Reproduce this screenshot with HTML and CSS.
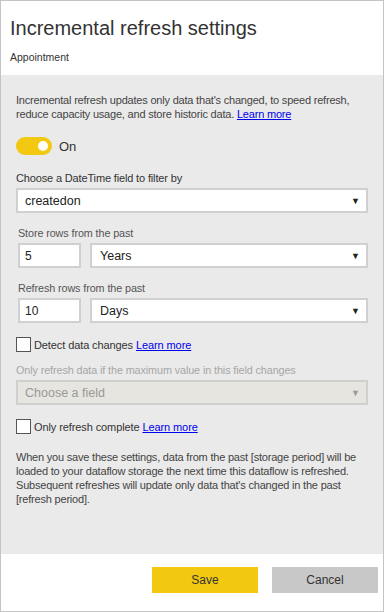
FILE: index.html
```html
<!DOCTYPE html>
<html lang="en">
<head>
  <meta charset="UTF-8">
  <meta name="viewport" content="width=device-width, initial-scale=1.0">
  <title>Incremental refresh settings</title>
  <link rel="stylesheet" href="styles.css">
</head>
<body>

  <div class="dialog">
    <header class="dialog-header">
      <h1 class="dialog-title">Incremental refresh settings</h1>
      <div class="dialog-subtitle">Appointment</div>
    </header>

    <div class="dialog-body">
      <p class="intro">Incremental refresh updates only data that's changed, to speed refresh, reduce capacity usage, and store historic data. <a href="#">Learn more</a></p>

      <div class="toggle-row">
        <span class="toggle"><span class="toggle-knob"></span></span>
        <span class="toggle-label">On</span>
      </div>

      <label class="field-label">Choose a DateTime field to filter by</label>
      <div class="select">
        <span>createdon</span>
        <span class="caret">&#9660;</span>
      </div>

      <div class="period">
        <label class="field-label small">Store rows from the past</label>
        <div class="period-row">
          <div class="num-input">5</div>
          <div class="select grow">
            <span>Years</span>
            <span class="caret">&#9660;</span>
          </div>
        </div>

        <label class="field-label small">Refresh rows from the past</label>
        <div class="period-row">
          <div class="num-input">10</div>
          <div class="select grow">
            <span>Days</span>
            <span class="caret">&#9660;</span>
          </div>
        </div>
      </div>

      <div class="check-row first">
        <span class="checkbox"></span>
        <span>Detect data changes <a href="#">Learn more</a></span>
      </div>

      <label class="field-label disabled">Only refresh data if the maximum value in this field changes</label>
      <div class="select disabled">
        <span>Choose a field</span>
        <span class="caret">&#9660;</span>
      </div>

      <div class="check-row">
        <span class="checkbox"></span>
        <span>Only refresh complete <a href="#">Learn more</a></span>
      </div>

      <p class="note">When you save these settings, data from the past [storage period] will be loaded to your dataflow storage the next time this dataflow is refreshed. Subsequent refreshes will update only data that's changed in the past [refresh period].</p>
    </div>

    <footer class="dialog-footer">
      <button class="btn btn-save">Save</button>
      <button class="btn btn-cancel">Cancel</button>
    </footer>
  </div>

</body>
</html>
```

FILE: styles.css
```css
body {
  margin: 0;
  padding: 0;
  font-family: "Liberation Sans", Arial, sans-serif;
  color: #333;
  background-color: #fff;
}
.dialog {
  width: 382px;
  height: 610px;
  border: 1px solid #c4c4c4;
  display: flex;
  flex-direction: column;
}
.dialog-header {
  background-color: #fff;
  height: 74px;
  padding: 0 9px;
  box-sizing: border-box;
}
.dialog-title {
  margin: 0;
  padding-top: 14px;
  font-size: 20px;
  font-weight: normal;
  line-height: 26px;
  color: #333;
}
.dialog-subtitle {
  margin-top: 9px;
  font-size: 10.5px;
  line-height: 14px;
  color: #333;
}
.dialog-body {
  flex: 1;
  background-color: #eaeaea;
  padding: 18px 15px 0 15px;
}
a {
  color: #0000ee;
  text-decoration: underline;
}
.intro {
  margin: 0;
  font-size: 11px;
  letter-spacing: -0.2px;
  line-height: 14px;
  color: #444;
}
.toggle-row {
  display: flex;
  align-items: center;
  margin-top: 16px;
}
.toggle {
  width: 36px;
  height: 18px;
  border-radius: 9px;
  background-color: #f2c811;
  position: relative;
}
.toggle-knob {
  position: absolute;
  right: 4px;
  top: 4px;
  width: 10px;
  height: 10px;
  border-radius: 50%;
  background-color: #fff;
}
.toggle-label {
  margin-left: 7px;
  font-size: 13px;
}
.field-label {
  display: block;
  margin-top: 16px;
  font-size: 11px;
  letter-spacing: -0.15px;
  line-height: 14px;
  color: #333;
}
.field-label.small {
  margin-top: 13px;
  color: #555;
  font-size: 10.8px;
  letter-spacing: -0.1px;
}
.field-label.disabled {
  color: #a6a6a6;
  font-size: 10.8px;
  letter-spacing: -0.1px;
  margin-top: 11px;
}
.select {
  margin-top: 3px;
  height: 25px;
  box-sizing: border-box;
  border: 2px solid #d0d0d0;
  background-color: #fff;
  display: flex;
  align-items: center;
  justify-content: space-between;
  padding: 0 6px 0 7px;
  font-size: 12.5px;
  color: #222;
}
.caret {
  font-size: 9px;
  color: #222;
}
.select.disabled {
  background-color: #e6e5df;
  color: #999;
}
.select.disabled .caret {
  color: #999;
}
.period {
  padding-left: 2px;
}
.period-row {
  display: flex;
  gap: 9px;
  margin-top: 3px;
}
.num-input {
  width: 63px;
  height: 25px;
  box-sizing: border-box;
  border: 2px solid #d0d0d0;
  background-color: #fff;
  padding-left: 5px;
  display: flex;
  align-items: center;
  font-size: 12px;
  color: #222;
}
.select.grow {
  flex: 1;
  margin-top: 0;
  padding-left: 8px;
}
.check-row {
  display: flex;
  align-items: center;
  gap: 3px;
  margin-top: 14px;
  font-size: 11px;
  letter-spacing: -0.1px;
}
.check-row.first {
  margin-top: 14px;
}
.checkbox {
  width: 13px;
  height: 13px;
  border: 1px solid #555;
  background-color: #fff;
}
.note {
  margin: 16px 0 0 0;
  font-size: 11px;
  letter-spacing: -0.2px;
  line-height: 14px;
  color: #444;
}
.dialog-footer {
  height: 57px;
  background-color: #fff;
  display: flex;
  justify-content: flex-end;
  align-items: flex-start;
  gap: 14px;
  padding: 13px 5px 0 0;
  box-sizing: border-box;
}
.btn {
  width: 106px;
  height: 26px;
  border: none;
  font-family: "Liberation Sans", Arial, sans-serif;
  font-size: 12px;
  color: #333;
  cursor: pointer;
}
.btn-save {
  background-color: #f2c811;
}
.btn-cancel {
  background-color: #c8c8c8;
}
```
